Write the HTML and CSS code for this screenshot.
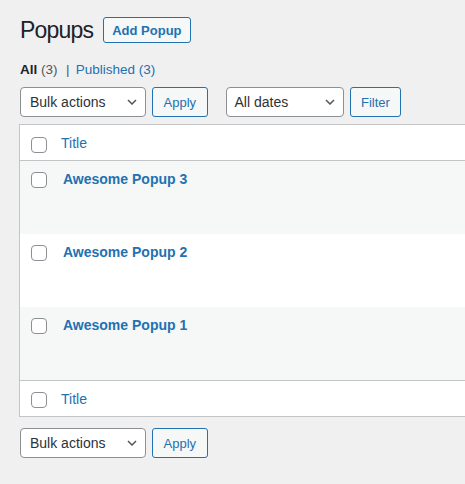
FILE: index.html
```html
<!DOCTYPE html>
<html lang="en">
<head>
<meta charset="utf-8">
<title>Popups</title>
<link rel="stylesheet" href="styles.css">
</head>
<body>
<div class="wrap">
  <div class="page-head">
    <h1 class="page-title">Popups</h1>
    <a class="btn btn-title">Add Popup</a>
  </div>

  <ul class="views">
    <li><span class="current">All</span> <span class="count">(3)</span></li>
    <li class="sep">|</li>
    <li><a class="view-link">Published (3)</a></li>
  </ul>

  <div class="tablenav tablenav-top">
    <div class="select select-bulk">
      <span>Bulk actions</span>
      <svg class="chev" width="10" height="6" viewBox="0 0 10 6"><polyline points="1,1 5,5 9,1" fill="none" stroke="#50575e" stroke-width="1.5"/></svg>
    </div>
    <button class="btn">Apply</button>
    <div class="select select-dates">
      <span>All dates</span>
      <svg class="chev" width="10" height="6" viewBox="0 0 10 6"><polyline points="1,1 5,5 9,1" fill="none" stroke="#50575e" stroke-width="1.5"/></svg>
    </div>
    <button class="btn">Filter</button>
  </div>

  <div class="table">
    <div class="row row-head">
      <div class="cb-cell"><span class="checkbox"></span></div>
      <div class="title-cell"><a class="col-link">Title</a></div>
    </div>
    <div class="row row-item alt">
      <div class="cb-cell"><span class="checkbox"></span></div>
      <div class="title-cell item-title"><a class="row-link">Awesome Popup 3</a></div>
    </div>
    <div class="row row-item">
      <div class="cb-cell"><span class="checkbox"></span></div>
      <div class="title-cell item-title"><a class="row-link">Awesome Popup 2</a></div>
    </div>
    <div class="row row-item alt">
      <div class="cb-cell"><span class="checkbox"></span></div>
      <div class="title-cell item-title"><a class="row-link">Awesome Popup 1</a></div>
    </div>
    <div class="row row-foot">
      <div class="cb-cell"><span class="checkbox"></span></div>
      <div class="title-cell"><a class="col-link">Title</a></div>
    </div>
  </div>

  <div class="tablenav tablenav-bottom">
    <div class="select select-bulk">
      <span>Bulk actions</span>
      <svg class="chev" width="10" height="6" viewBox="0 0 10 6"><polyline points="1,1 5,5 9,1" fill="none" stroke="#50575e" stroke-width="1.5"/></svg>
    </div>
    <button class="btn">Apply</button>
  </div>
</div>
</body>
</html>
```

FILE: styles.css
```css
html, body {
  margin: 0;
  padding: 0;
  overflow: hidden;
  background: #f0f0f1;
}

body {
  font-family: "Liberation Sans", Arial, sans-serif;
  color: #1d2327;
}

.wrap {
  padding: 17px 0 0 20px;
}

.page-head {
  display: flex;
  align-items: center;
  height: 26px;
  gap: 10px;
}

.page-title {
  margin: 0;
  font-size: 23px;
  font-weight: 400;
  line-height: 26px;
  letter-spacing: -0.8px;
  color: #1d2327;
}

.btn {
  box-sizing: border-box;
  display: flex;
  align-items: center;
  height: 30px;
  padding: 0 10.5px;
  border: 1px solid #2271b1;
  border-radius: 3px;
  background: #f6f7f7;
  color: #2271b1;
  font-family: inherit;
  font-size: 13px;
  line-height: 1;
  margin: 0;
}

.btn-title {
  height: 26px;
  padding: 0 8px;
  font-weight: 700;
  text-decoration: none;
}

.views {
  list-style: none;
  margin: 17px 0 0;
  padding: 0;
  display: flex;
  font-size: 13.5px;
  line-height: 20px;
  height: 20px;
}

.current {
  font-weight: 700;
  color: #1d2327;
}

.count {
  color: #50575e;
}

.sep {
  color: #50575e;
  margin: 0 6.25px 0 8.5px;
}

.view-link {
  color: #2271b1;
  text-decoration: none;
}

.tablenav {
  display: flex;
  gap: 6px;
  height: 30px;
  margin-top: 7px;
}

.tablenav-bottom {
  margin-top: 11px;
}

.select {
  box-sizing: border-box;
  height: 30px;
  display: flex;
  align-items: center;
  justify-content: space-between;
  padding: 0 8px 0 9px;
  border: 1px solid #8c8f94;
  border-radius: 4px;
  background: #fff;
  font-size: 14px;
  color: #2c3338;
}

.select-bulk {
  width: 126px;
}

.select-dates {
  width: 118px;
  margin-left: 12px;
  padding-left: 8px;
}

.chev {
  display: block;
}

.table {
  width: 620px;
  margin: 7px 0 0 -1px;
  border: 1px solid #c3c4c7;
  background: #fff;
}

.row {
  display: flex;
}

.row-head {
  height: 35px;
  border-bottom: 1px solid #c3c4c7;
}

.row-foot {
  height: 35px;
  border-top: 1px solid #c3c4c7;
}

.row-item {
  height: 73px;
}

.alt {
  background: #f6f7f7;
}

.cb-cell {
  box-sizing: border-box;
  width: 41px;
  padding: 11px 0 0 11px;
}

.row-head .cb-cell {
  padding-top: 12px;
}

.checkbox {
  display: block;
  box-sizing: border-box;
  width: 16px;
  height: 16px;
  border: 1px solid #8c8f94;
  border-radius: 4px;
  background: #fff;
}

.title-cell {
  padding-top: 8px;
  font-size: 14px;
  line-height: 20px;
}

.item-title {
  padding-left: 2px;
}

.col-link {
  color: #2271b1;
  text-decoration: none;
}

.row-link {
  color: #2271b1;
  font-weight: 700;
  text-decoration: none;
}
```
